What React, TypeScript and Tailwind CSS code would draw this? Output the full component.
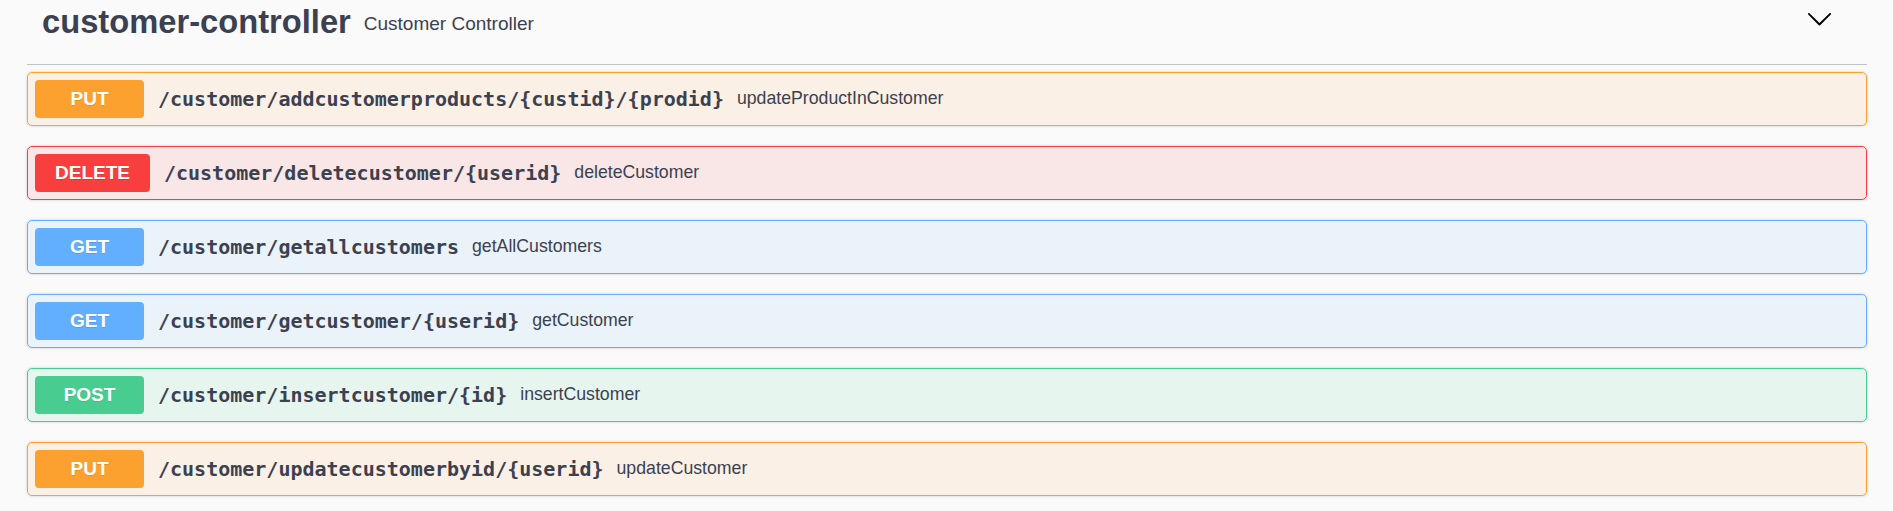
import React from 'react';

type Method = 'PUT' | 'DELETE' | 'GET' | 'POST';

const methodStyles: Record<Method, { block: string; badge: string }> = {
  PUT: { block: 'bg-[#fca130]/10 border-[#fca130]', badge: 'bg-[#fca130]' },
  DELETE: { block: 'bg-[#f93e3e]/10 border-[#f93e3e]', badge: 'bg-[#f93e3e]' },
  GET: { block: 'bg-[#61affe]/10 border-[#61affe]', badge: 'bg-[#61affe]' },
  POST: { block: 'bg-[#49cc90]/10 border-[#49cc90]', badge: 'bg-[#49cc90]' },
};

const operations: { method: Method; path: string; summary: string }[] = [
  { method: 'PUT', path: '/customer/addcustomerproducts/{custid}/{prodid}', summary: 'updateProductInCustomer' },
  { method: 'DELETE', path: '/customer/deletecustomer/{userid}', summary: 'deleteCustomer' },
  { method: 'GET', path: '/customer/getallcustomers', summary: 'getAllCustomers' },
  { method: 'GET', path: '/customer/getcustomer/{userid}', summary: 'getCustomer' },
  { method: 'POST', path: '/customer/insertcustomer/{id}', summary: 'insertCustomer' },
  { method: 'PUT', path: '/customer/updatecustomerbyid/{userid}', summary: 'updateCustomer' },
];

const App: React.FC = () => {
  return (
    <div className="min-h-screen bg-[#fafafa] pl-[27px] pr-[26px] text-[#3b4151] font-['Liberation_Sans',Arial,sans-serif]">
      {/* Tag header */}
      <div className="flex items-center h-[65px] pb-[20px] pl-[15px] pr-[34px] border-b border-[#3b4151]/30 mb-[7px]">
        <span className="text-[32.7px] font-bold leading-none">customer-controller</span>
        <small className="text-[19px] leading-none px-[13px] pt-[2px]">Customer Controller</small>
        <div className="flex-1" />
        <svg width="27" height="27" viewBox="0 0 20 20" className="mb-[7px]" fill="#000">
          <path d="M17.418 6.109c.272-.268.709-.268.979 0s.271.701 0 .969l-7.908 7.83c-.27.268-.707.268-.979 0l-7.908-7.83c-.27-.268-.27-.701 0-.969.271-.268.709-.268.979 0L10 13.25l7.418-7.141z" />
        </svg>
      </div>

      {/* Operations */}
      {operations.map((op, index) => (
        <div
          key={index}
          className={`mb-[20px] border rounded-[5px] shadow-[0_0_3px_rgba(0,0,0,0.19)] ${methodStyles[op.method].block}`}
        >
          <div className="flex items-center p-[7px]">
            <span
              className={`min-w-[109px] h-[38px] px-[20px] flex items-center justify-center rounded-[4px] text-white text-[19px] font-bold [text-shadow:0_1px_0_rgba(0,0,0,0.1)] ${methodStyles[op.method].badge}`}
            >
              {op.method}
            </span>
            <span className="px-[14px] text-[20px] font-bold font-['DejaVu_Sans_Mono',monospace] leading-none">
              {op.path}
            </span>
            <span className="text-[17.7px] leading-none -ml-[1px]">{op.summary}</span>
          </div>
        </div>
      ))}
    </div>
  );
};

export default App;
